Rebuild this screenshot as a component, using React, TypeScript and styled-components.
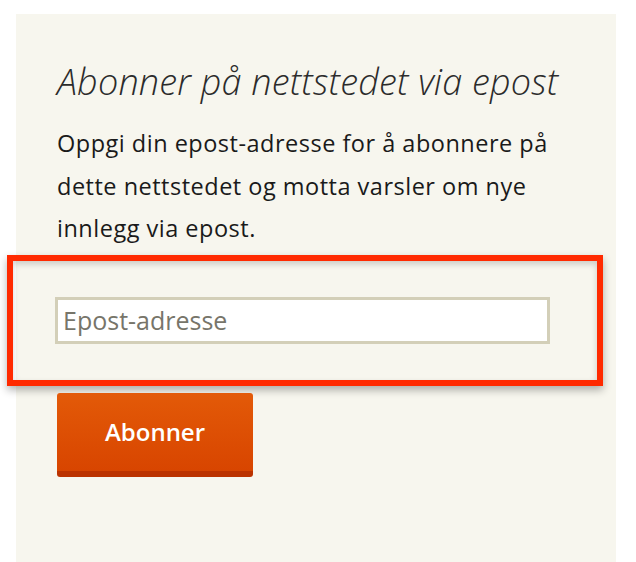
import React from 'react';
import styled, { createGlobalStyle } from 'styled-components';

const GlobalStyle = createGlobalStyle`
  html, body {
    margin: 0;
    padding: 0;
    background: #fff;
  }
  body {
    font-family: "Open Sans", "Noto Sans", sans-serif;
  }
`;

export default function App() {
  return (
    <>
      <GlobalStyle />
      <Page>
        <Widget>
          <Title>Abonner på nettstedet via epost</Title>
          <Intro>
            Oppgi din epost-adresse for å abonnere på dette nettstedet og motta
            varsler om nye innlegg via epost.
          </Intro>
          <Highlight>
            <EmailInput type="email" placeholder="Epost-adresse" />
          </Highlight>
          <SubmitButton type="button">Abonner</SubmitButton>
        </Widget>
      </Page>
    </>
  );
}

const Page = styled.div`
  padding: 14px 20px 0 16px;
  height: 562px;
  box-sizing: border-box;
  overflow: hidden;
`;

const Widget = styled.section`
  display: flex;
  flex-direction: column;
  align-items: flex-start;
  box-sizing: border-box;
  width: 600px;
  height: 548px;
  padding: 46px 40px 0 41px;
  background-color: #f7f6ee;
`;

const Title = styled.h2`
  margin: 0;
  font-family: "Open Sans", sans-serif;
  font-size: 36px;
  font-style: italic;
  font-weight: 300;
  line-height: 44px;
  letter-spacing: 0.2px;
  color: #2b2b2b;
`;

const Intro = styled.p`
  margin: 18px 0 0;
  max-width: 520px;
  font-family: "Open Sans", sans-serif;
  font-size: 23.5px;
  line-height: 42.5px;
  letter-spacing: 0.5px;
  color: #1a1a1a;
`;

const Highlight = styled.div`
  box-sizing: border-box;
  width: 596px;
  margin: 5px 0 0 -50px;
  padding: 36px 0 36px 42px;
  border: 6px solid #ff2a00;
  box-shadow: 0 4px 8px rgba(0, 0, 0, 0.3), inset 0 3px 6px rgba(0, 0, 0, 0.18);
`;

const EmailInput = styled.input`
  display: block;
  box-sizing: border-box;
  width: 495px;
  height: 47px;
  margin: 0;
  padding: 0 5px;
  border: 3px solid #d3cfb8;
  background: #fff;
  font-family: "Open Sans", sans-serif;
  font-size: 25px;
  color: #333;
  outline: none;

  &::placeholder {
    color: #77756a;
  }
`;

const SubmitButton = styled.button`
  margin-top: 7px;
  width: 196px;
  height: 84px;
  border: none;
  border-bottom: 6px solid #bb3300;
  border-radius: 3px;
  background: linear-gradient(#e35a08, #d84500);
  color: #fff;
  font-family: "Open Sans", sans-serif;
  font-size: 24px;
  font-weight: 600;
  cursor: pointer;
`;
